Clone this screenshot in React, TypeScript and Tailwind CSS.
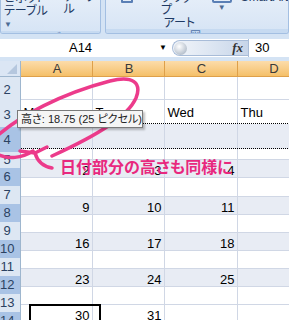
import React from "react";

type Row = { cls: string; cells: string[]; left?: boolean };

const rows: Row[] = [
  { cls: "h-[23px] bg-white border-b border-[#d0d7e5]", cells: ["", "", "", ""] },
  { cls: "h-[24px] bg-white border-b border-dotted border-black", cells: ["Mon", "Tue", "Wed", "Thu"], left: true },
  { cls: "h-[25px] bg-[#e8ecf4] border-b border-dotted border-black", cells: ["", "", "", ""] },
  { cls: "h-[11px] bg-white border-b border-[#d0d7e5]", cells: ["", "", "", ""] },
  { cls: "h-[18px] bg-[#e8ecf4] border-b border-[#d0d7e5]", cells: ["2", "3", "4", "5"] },
  { cls: "h-[19px] bg-white border-b border-[#d0d7e5]", cells: ["", "", "", ""] },
  { cls: "h-[18px] bg-[#e8ecf4] border-b border-[#d0d7e5]", cells: ["9", "10", "11", "12"] },
  { cls: "h-[18px] bg-white border-b border-[#d0d7e5]", cells: ["", "", "", ""] },
  { cls: "h-[18px] bg-[#e8ecf4] border-b border-[#d0d7e5]", cells: ["16", "17", "18", "19"] },
  { cls: "h-[18px] bg-white border-b border-[#d0d7e5]", cells: ["", "", "", ""] },
  { cls: "h-[18px] bg-[#e8ecf4] border-b border-[#d0d7e5]", cells: ["23", "24", "25", "26"] },
  { cls: "h-[18px] bg-white border-b border-[#d0d7e5]", cells: ["", "", "", ""] },
  { cls: "h-[18px] bg-white border-b border-[#d0d7e5]", cells: ["30", "31", "", ""] },
];

const rowHeads: { label: string; cls: string }[] = [
  { label: "2", cls: "h-[26px] bg-[#dde7f3]" },
  { label: "3", cls: "h-[24px] bg-[#dde7f3]" },
  { label: "4", cls: "h-[25px] bg-[#a9c3e5]" },
  { label: "5", cls: "h-[16px] bg-[#dde7f3]" },
  { label: "6", cls: "h-[18px] bg-[#a9c3e5]" },
  { label: "7", cls: "h-[18px] bg-[#dde7f3]" },
  { label: "8", cls: "h-[18px] bg-[#a9c3e5]" },
  { label: "9", cls: "h-[18px] bg-[#dde7f3]" },
  { label: "10", cls: "h-[18px] bg-[#a9c3e5]" },
  { label: "11", cls: "h-[18px] bg-[#dde7f3]" },
  { label: "12", cls: "h-[18px] bg-[#a9c3e5]" },
  { label: "13", cls: "h-[18px] bg-[#dde7f3]" },
  { label: "14", cls: "h-[18px] bg-[#a9c3e5]" },
];

export default function App() {
  return (
    <div className="relative w-[289px] h-[320px] overflow-hidden bg-[#d4e3f4] font-['Liberation_Sans','Noto_Sans_CJK_JP',sans-serif] [font-feature-settings:'palt']">
      {/* Ribbon */}
      <div className="h-[34px] flex gap-[4px]">
        <div className="w-[101px] flex flex-col rounded-b-[3px] border border-t-0 border-[#a3bfe2] bg-gradient-to-b from-[#e4edf8] to-[#d6e4f5] overflow-hidden">
          <div className="flex-1 flex gap-[14px] pl-[3px] text-[12px] leading-[12px] text-[#1e3a64]">
            <div className="flex flex-col -mt-[8px]">
              <span>ピボット</span>
              <span className="mt-[1px]">テーブル <span className="text-[8px] text-[#4d6b94]">▼</span></span>
            </div>
            <div className="-mt-[9px]">テーブル</div>
          </div>
          <div className="h-[15px] bg-[#c6daf1] text-center text-[11px] leading-[15px] text-[#4f72a8]">テーブル</div>
        </div>
        <div className="flex-1 flex flex-col rounded-b-[3px] border border-t-0 border-[#a3bfe2] bg-gradient-to-b from-[#e4edf8] to-[#d6e4f5] overflow-hidden">
          <div className="flex-1 flex items-start text-[12px] leading-[12px] text-[#1e3a64]">
            <div className="ml-[15px] -mt-[8px] w-[13px] h-[11px] border-2 border-[#5a7fb5] rounded-[1px]" />
            <div className="ml-[28px] flex flex-col items-center -mt-[8px]">
              <span>クリップ</span>
              <span className="mt-[1px]">アート</span>
            </div>
            <div className="ml-[14px] flex flex-col items-center -mt-[7px]">
              <div className="w-[20px] h-[10px] border-2 border-[#5a7fb5] rounded-[2px]" />
              <span className="text-[8px] leading-[10px] text-[#4d6b94]">▼</span>
            </div>
            <div className="ml-[9px] -mt-[9px] text-[12px]">SmartArt</div>
          </div>
          <div className="h-[15px] bg-[#c6daf1] flex items-center justify-center text-[11px] leading-[15px] text-[#4f72a8]">
            <span className="ml-[-3px]">図</span>
          </div>
        </div>
      </div>

      {/* Formula bar */}
      <div className="mt-[5px] h-[18px] flex bg-white">
        <div className="w-[172px] flex items-center">
          <div className="flex-1 text-center text-[13px] leading-[18px] text-black pl-[2px]">A14</div>
          <span className="mr-[5px] text-[8px] text-black">▼</span>
        </div>
        <div className="w-[76px] h-[16px] mt-[1px] flex items-center rounded-l-full border border-r-0 border-[#a8bcd8] bg-gradient-to-r from-[#f2f5fa] via-[#dde6f2] to-[#c7d5e9]">
          <div className="ml-[1px] w-[13px] h-[13px] rounded-full bg-[radial-gradient(circle_at_40%_35%,#ffffff,#b9c3cf_70%,#8e9aab)]" />
          <div className="flex-1" />
          <span className="mr-[5px] font-['Liberation_Serif',serif] italic font-bold text-[13px] leading-[16px] text-[#333]">fx</span>
        </div>
        <div className="flex-1 border-l border-[#a8bcd8] pl-[6px] text-[13px] leading-[18px] text-black">30</div>
      </div>

      {/* Grid */}
      <div className="mt-[4px] flex">
        <div className="w-[28px] flex flex-col border-r border-[#9eb6ce]">
          <div className="h-[16px] bg-[#dbe6f4] border-b border-[#9eb6ce] flex items-end justify-end pr-[3px] pb-[2px]">
            <svg width="10" height="10" viewBox="0 0 10 10">
              <polygon points="10,0 10,10 0,10" fill="#b5c7de" />
            </svg>
          </div>
          {rowHeads.map((r) => (
            <div key={r.label} className={`${r.cls} flex items-center justify-center pr-[6px] text-[13px] text-[#2b4262]`}>
              {r.label}
            </div>
          ))}
        </div>
        <div className="flex-1 flex flex-col">
          <div className="h-[16px] grid grid-cols-[72px_72px_73px_72px] bg-gradient-to-b from-[#fcdcaa] to-[#f5c068] border-b border-[#dea04a]">
            {["A", "B", "C", "D"].map((c) => (
              <div key={c} className="border-r border-[#dea04a] text-center text-[13px] leading-[15px] text-[#3a3a3a]">
                {c}
              </div>
            ))}
          </div>
          {rows.map((r, i) => (
            <div key={i} className={`${r.cls} grid grid-cols-[72px_72px_73px_72px]`}>
              {r.cells.map((c, j) => (
                <div
                  key={j}
                  className={`border-r border-[#d0d7e5] flex items-end overflow-hidden text-[13px] leading-[13px] text-black ${
                    r.left ? "justify-start pl-[2px] pb-[4px]" : "justify-end pr-[3px]"
                  }`}
                >
                  {c}
                </div>
              ))}
            </div>
          ))}
        </div>
      </div>

      {/* Active cell */}
      <div className="absolute left-[29px] top-[304px] w-[72px] h-[21px] border-2 border-black" />

      {/* Pink annotation */}
      <svg className="absolute left-0 top-0 pointer-events-none" width="289" height="320" viewBox="0 0 289 320">
        <g fill="none" stroke="#ec3b8b" strokeWidth="3.5" strokeLinecap="round" strokeLinejoin="round">
          <path d="M -3 136 C 20 116, 60 94, 110 81 C 133 75, 142 83, 136 98 C 128 116, 100 134, 52 156" />
          <path d="M -3 154 C 8 160, 22 158, 33 151" />
          <path d="M 20 151 L 35 153 L 47 147" />
          <path d="M 35 153 C 37 160, 41 166, 52 168" />
        </g>
      </svg>

      {/* Tooltip */}
      <div className="absolute left-[17px] top-[110px] w-[126px] h-[18px] border border-[#7a7a7a] bg-[#f5f5f5] shadow-[2px_2px_2px_rgba(0,0,0,0.25)] pl-[3px] text-[11px] leading-[16px] text-[#222] whitespace-nowrap">
        高さ: 18.75 (25 ピクセル)
      </div>

      {/* Pink text */}
      <div className="absolute left-[60px] top-[160px] text-[16px] leading-[16px] font-bold text-[#e8287e] whitespace-nowrap">
        日付部分の高さも同様に
      </div>
    </div>
  );
}
